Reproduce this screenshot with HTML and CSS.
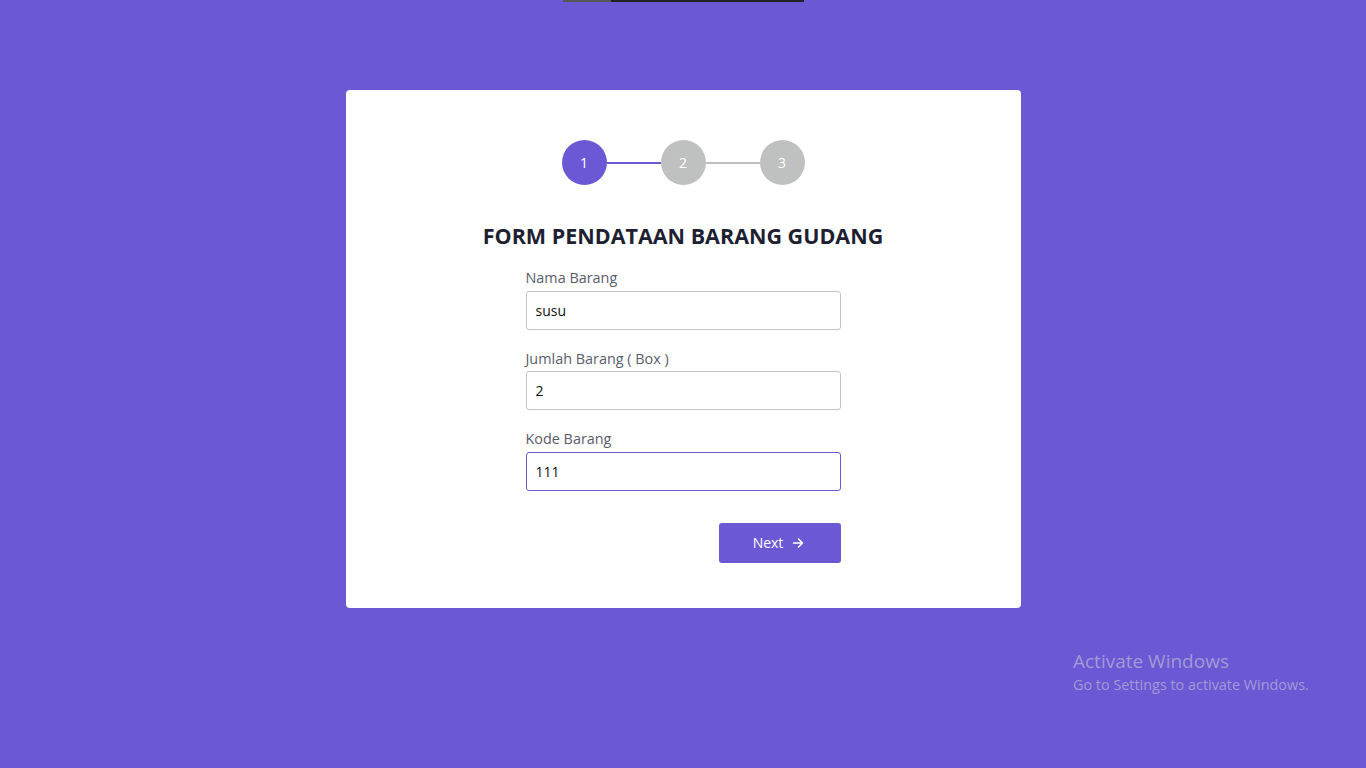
FILE: index.html
```html
<!DOCTYPE html>
<html lang="id">
<head>
<meta charset="utf-8">
<title>Form Pendataan Barang Gudang</title>
<link rel="stylesheet" href="styles.css">
</head>
<body>
<div class="topbar"><span class="topbar-thumb"></span></div>
<main class="card">
  <div class="steps">
    <span class="step active">1</span>
    <span class="line active"></span>
    <span class="step">2</span>
    <span class="line"></span>
    <span class="step">3</span>
  </div>
  <h1 class="title">FORM PENDATAAN BARANG GUDANG</h1>
  <form class="form">
    <label class="field">
      <span class="label">Nama Barang</span>
      <input class="input" type="text" value="susu">
    </label>
    <label class="field">
      <span class="label">Jumlah Barang ( Box )</span>
      <input class="input" type="text" value="2">
    </label>
    <label class="field">
      <span class="label">Kode Barang</span>
      <input class="input focused" type="text" value="111">
    </label>
    <div class="actions">
      <button type="button" class="btn">Next
        <svg class="arrow" width="12" height="12" viewBox="0 0 12 12" fill="none" stroke="currentColor" stroke-width="1.5" stroke-linecap="round" stroke-linejoin="round"><path d="M1.5 6h9M6.5 2l4 4-4 4"/></svg>
      </button>
    </div>
  </form>
</main>
<div class="watermark">
  <div class="wm-title">Activate Windows</div>
  <div class="wm-sub">Go to Settings to activate Windows.</div>
</div>
</body>
</html>
```
FILE: styles.css
```css
* { box-sizing: border-box; }
html, body { margin: 0; padding: 0; }
body {
  background: #6b58d4;
  font-family: "Open Sans", "Liberation Sans", sans-serif;
  min-height: 768px;
  overflow: hidden;
}
.topbar {
  width: 241px;
  height: 2px;
  margin: 0 0 0 563px;
  background: #222226;
  display: flex;
}
.topbar-thumb {
  width: 48px;
  height: 2px;
  background: #555558;
}
.card {
  width: 675px;
  margin: 88px auto 0;
  background: #fff;
  border-radius: 4px;
  padding: 50px 0 45px;
  display: flex;
  flex-direction: column;
  align-items: center;
}
.steps {
  display: flex;
  align-items: center;
}
.step {
  width: 45px;
  height: 45px;
  border-radius: 50%;
  background: #bfc0c0;
  color: #fff;
  font-size: 14px;
  display: flex;
  align-items: center;
  justify-content: center;
}
.step.active { background: #6b58d4; }
.line {
  width: 54px;
  height: 2px;
  background: #bfc0c0;
}
.line.active { background: #6b58d4; }
.title {
  margin: 37px 0 0;
  font-size: 21.5px;
  line-height: 28px;
  font-weight: 700;
  color: #1e1f33;
  letter-spacing: 0;
}
.form {
  width: 315px;
  margin-top: 18px;
  display: flex;
  flex-direction: column;
}
.field {
  display: flex;
  flex-direction: column;
  margin-bottom: 19px;
}
.label {
  font-size: 14.4px;
  line-height: 20px;
  color: #595c6b;
  margin-bottom: 2.5px;
}
.input {
  width: 315px;
  height: 39px;
  border: 1px solid #c4c4c4;
  border-radius: 3px;
  padding: 0 9px;
  font-family: "Open Sans", "Liberation Sans", sans-serif;
  font-size: 14px;
  color: #111;
  outline: none;
  background: #fff;
}
.input.focused { border-color: #6b58d4; }
.actions {
  display: flex;
  justify-content: flex-end;
  margin-top: 13px;
}
.btn {
  width: 122px;
  height: 40px;
  border: none;
  border-radius: 3px;
  background: #6b58d4;
  color: #fff;
  font-family: "Open Sans", "Liberation Sans", sans-serif;
  font-size: 14px;
  display: flex;
  align-items: center;
  justify-content: center;
  gap: 9px;
  padding: 0 2px 0 0;
}
.arrow { display: block; }
.watermark {
  position: absolute;
  left: 1073px;
  top: 648px;
  color: rgba(200, 200, 215, 0.6);
  font-family: "Open Sans", "Liberation Sans", sans-serif;
}
.wm-title { font-size: 19px; line-height: 26px; }
.wm-sub { font-size: 14.4px; line-height: 21px; }
```
